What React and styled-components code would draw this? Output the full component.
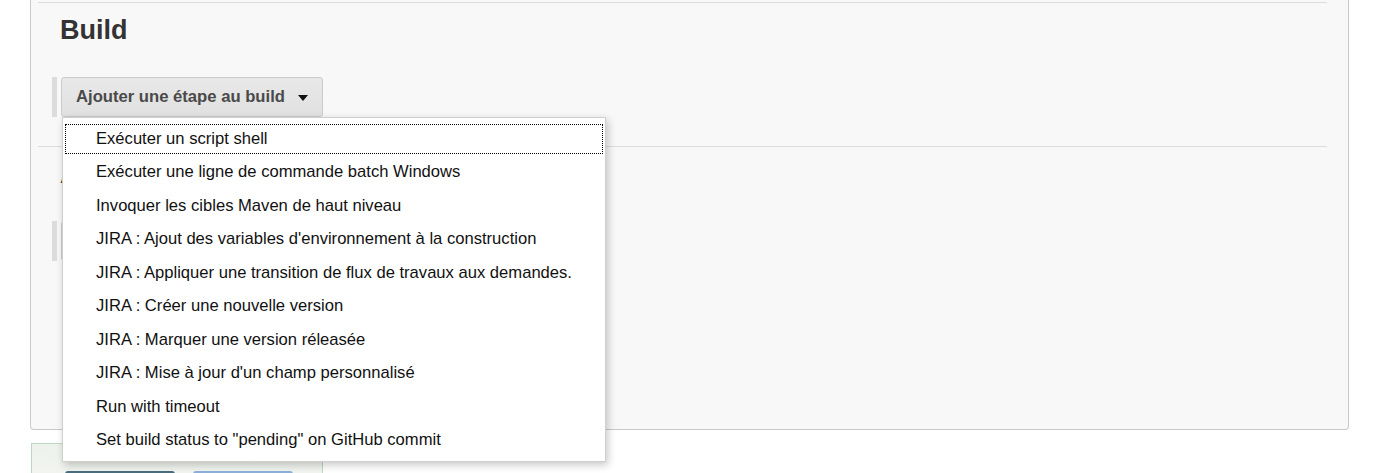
import styled, { createGlobalStyle } from "styled-components";

const GlobalStyle = createGlobalStyle`
  body {
    margin: 0;
    background: #fff;
    font-family: "Liberation Sans", Arial, sans-serif;
  }
`;

const Page = styled.div`
  width: 1383px;
  height: 473px;
  overflow: hidden;
  padding-left: 30px;
  box-sizing: border-box;
`;

const Panel = styled.div`
  width: 1319px;
  box-sizing: border-box;
  padding: 2px 21px 0 7px;
  background: #f8f8f8;
  border: 1px solid #c9c9c9;
  border-top: none;
  border-radius: 0 0 4px 4px;
`;

const Section = styled.div`
  border-top: 1px solid #dcdcdc;
  padding-bottom: ${({ $bottom }) => $bottom}px;
`;

const Heading = styled.h2`
  margin: 11px 0 0 22px;
  font-size: 27px;
  line-height: 32px;
  font-weight: bold;
  color: #333;
`;

const ButtonGroup = styled.div`
  position: relative;
  display: flex;
  margin: 31px 0 0 14px;
  height: 40px;
  border-left: 5px solid #dcdcdc;
  padding-left: 4px;
`;

const AddButton = styled.div`
  display: flex;
  align-items: center;
  gap: 13px;
  height: 40px;
  box-sizing: border-box;
  padding: 0 14px 0 14px;
  border: 1px solid #cbcbcb;
  border-radius: 3px;
  background: linear-gradient(#e8e8e8, #e1e1e1);
  color: #4a4a4a;
  font-size: 16.65px;
  font-weight: bold;
`;

const Caret = styled.span`
  width: 0;
  height: 0;
  border-left: 5px solid transparent;
  border-right: 5px solid transparent;
  border-top: 6px solid #111;
  margin-top: 1px;
`;

const Menu = styled.ul`
  position: absolute;
  top: 40px;
  left: 5px;
  z-index: 10;
  width: 544px;
  box-sizing: border-box;
  margin: 0;
  padding: 4px 0;
  list-style: none;
  background: #fff;
  border: 1px solid #cfcfcf;
  box-shadow: 2px 3px 8px rgba(0, 0, 0, 0.22);
`;

const MenuItem = styled.li`
  display: flex;
  align-items: center;
  height: 33.5px;
  padding-left: 33px;
  font-size: 16.6px;
  color: #111;
  outline: ${({ $focused }) => ($focused ? "1px dotted #000" : "none")};
  outline-offset: -3px;
`;

const Footer = styled.div`
  margin: 13px 0 0 1px;
  width: 292px;
  height: 60px;
  box-sizing: border-box;
  border: 1px solid #bcd8c4;
  background: linear-gradient(#eef2ec, #f4f7f2);
  display: flex;
  gap: 18px;
  padding: 27px 0 0 33px;
`;

const FooterButton = styled.div`
  width: ${({ $w }) => $w}px;
  height: 30px;
  border-radius: 3px;
  background: ${({ $color }) => $color};
`;

const items = [
  "Exécuter un script shell",
  "Exécuter une ligne de commande batch Windows",
  "Invoquer les cibles Maven de haut niveau",
  "JIRA : Ajout des variables d'environnement à la construction",
  "JIRA : Appliquer une transition de flux de travaux aux demandes.",
  "JIRA : Créer une nouvelle version",
  "JIRA : Marquer une version réleasée",
  "JIRA : Mise à jour d'un champ personnalisé",
  "Run with timeout",
  'Set build status to "pending" on GitHub commit',
];

export default function App() {
  return (
    <Page>
      <GlobalStyle />
      <Panel>
        <Section $bottom={29}>
          <Heading>Build</Heading>
          <ButtonGroup>
            <AddButton>
              Ajouter une étape au build
              <Caret />
            </AddButton>
            <Menu>
              {items.map((item, i) => (
                <MenuItem key={item} $focused={i === 0}>
                  {item}
                </MenuItem>
              ))}
            </Menu>
          </ButtonGroup>
        </Section>
        <Section $bottom={168}>
          <Heading>Actions à la suite du build</Heading>
          <ButtonGroup>
            <AddButton>
              Ajouter une action après le build
              <Caret />
            </AddButton>
          </ButtonGroup>
        </Section>
      </Panel>
      <Footer>
        <FooterButton $w={110} $color="#4a6e7e" />
        <FooterButton $w={100} $color="#8db0da" />
      </Footer>
    </Page>
  );
}
